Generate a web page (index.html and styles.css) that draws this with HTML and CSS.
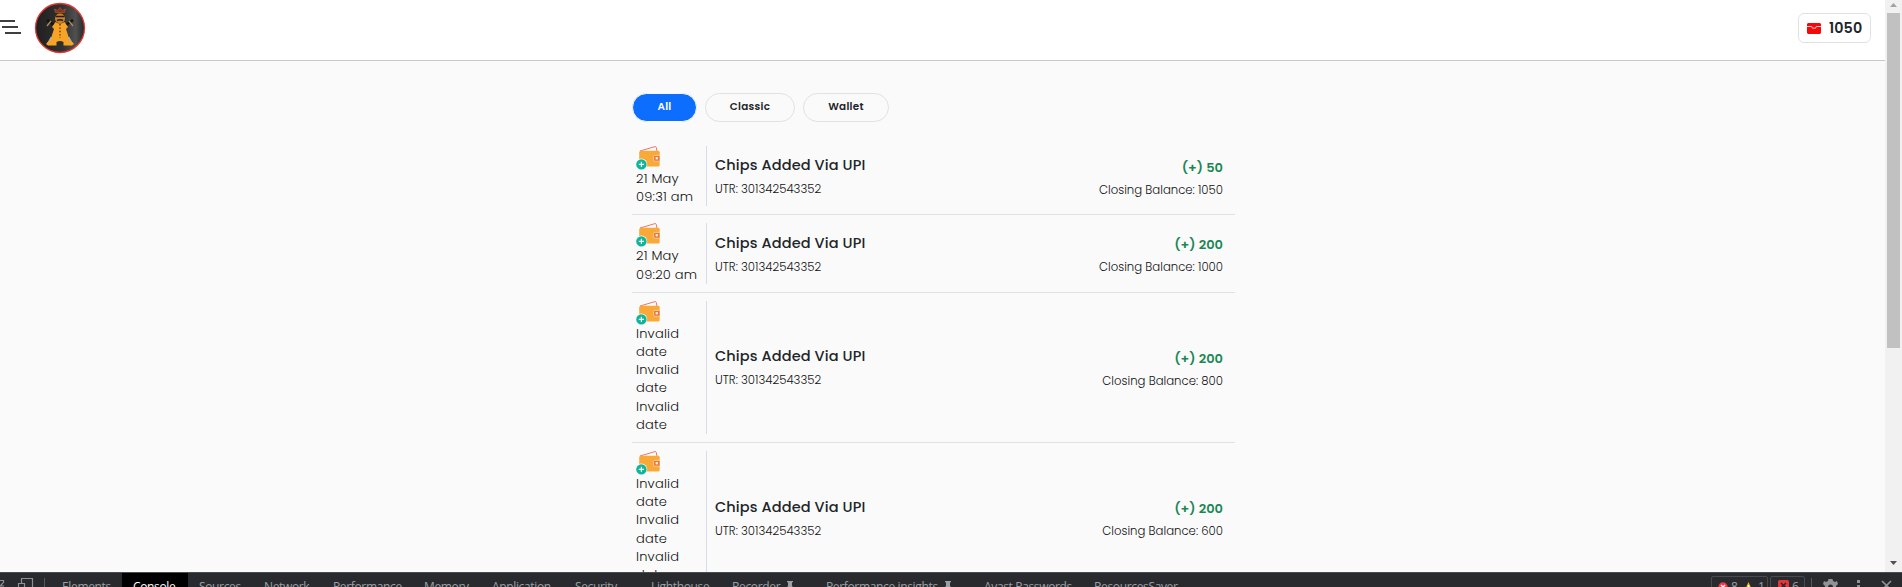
FILE: index.html
```html
<!DOCTYPE html>
<html lang="en">
<head>
<meta charset="utf-8">
<title>Transaction History</title>
<link rel="stylesheet" href="styles.css">
</head>
<body>
<svg width="0" height="0" class="defs">
  <symbol id="wallet" viewBox="0 0 24 24">
    <path d="M4 5L19 .6Q20 .4 20.3 1.5L21 5.5" fill="none" stroke="#ee7468" stroke-width="1"/>
    <path d="M3.2 6.5Q3.2 4.7 5 4.7H22.2Q23.7 4.7 23.7 6.2V18.9Q23.7 20.4 22.2 20.4H5Q3.2 20.4 3.2 18.5Z" fill="#f9a938"/>
    <path d="M24 9.4H18.8Q17.6 9.4 17.6 10.6V14Q17.6 15.2 18.8 15.2H24Z" fill="#e9743c" stroke="#fbd9a5" stroke-width=".8"/>
    <rect x="19.6" y="11.1" width="2.3" height="2.3" fill="#fff0df"/>
    <circle cx="5.4" cy="18.4" r="5.8" fill="#fafafa"/>
    <circle cx="5.4" cy="18.4" r="5.2" fill="#0db59a"/>
    <path d="M5.4 15.8V21M2.8 18.4H8" stroke="#fff" stroke-width="1.2"/>
  </symbol>
  <symbol id="pin" viewBox="0 0 8 11">
    <path d="M1 0H7V1.3H6V5L7.5 6.5V7.5H.5V6.5L2 5V1.3H1ZM3.5 7.5H4.5V11H3.5Z" fill="#9aa0a6"/>
  </symbol>
</svg>
<div class="viewport">
  <div class="page">
    <header class="header">
      <svg class="menu" width="24" height="18" viewBox="0 0 24 18"><path d="M0 3H15M2 9H18M5 15H21" stroke="#000" stroke-width="1.7" fill="none"/></svg>
      <svg class="logo" width="52" height="52" viewBox="0 0 52 52">
        <defs><linearGradient id="lg"><stop offset="0" stop-color="#202020"/><stop offset=".55" stop-color="#303030"/><stop offset=".82" stop-color="#505050"/><stop offset="1" stop-color="#252525"/></linearGradient></defs>
        <circle cx="26" cy="26" r="24.500" fill="url(#lg)" stroke="#df3831" stroke-width="1.300"/>
        <path d="M18 35L14 42M34 35L38 42" stroke="#aeb3bc" stroke-width="2.400"/>
        <path d="M13 18L20 23M39 18L32 23" stroke="#171310" stroke-width="2.600"/>
        <path d="M13 24L17 19M39 24L35 19" stroke="#b08a58" stroke-width="1.300"/>
        <path d="M21.500 20Q26 23 30.500 20L34 25L32 27L34 33L35 38Q39 40 40 42L38 43.500H29.500V40Q26 38 22.500 40V43.500H14L12 42Q13 40 17 38L18 33L20 27L18 25Z" fill="#f7a326"/>
        <circle cx="26" cy="16.500" r="5" fill="#c98321"/>
        <path d="M21.500 14.500H30.500M23 18.500Q26 17 29 18.500" stroke="#291b13" stroke-width="1.400" fill="none"/>
        <path d="M21.500 10.500L20.500 7L23.500 8.500L26 5.500L28.500 8.500L31.500 7L30.500 10.500Z" fill="#8d2d20" stroke="#a5532a" stroke-width=".8"/>
        <path d="M26 22V36" stroke="#5b3410" stroke-width="1.400" stroke-dasharray="1.400 2"/>
      </svg>
      <div class="balance">
        <svg width="14" height="11" viewBox="0 0 14 11"><path d="M1 0H13L14 1V10L13 11H1L0 10V1Z" fill="#f60808"/><path d="M0 3.500H4.800L5.400 5.200H8.600L9.200 3.500H14" fill="none" stroke="#ffc1c1" stroke-width="1"/></svg>
        <span>1050</span>
      </div>
    </header>
    <main class="content">
      <nav class="filters">
        <a class="pill active">All</a><a class="pill classic">Classic</a><a class="pill wallet">Wallet</a>
      </nav>
      <section class="row">
        <div class="when"><svg class="icon"><use href="#wallet"/></svg><div>21 May</div><div>09:31 am</div></div>
        <div class="what"><h2>Chips Added Via UPI</h2><p>UTR: 301342543352</p></div>
        <div class="sum"><b>(+) 50</b><p>Closing Balance: 1050</p></div>
      </section>
      <section class="row">
        <div class="when"><svg class="icon"><use href="#wallet"/></svg><div>21 May</div><div>09:20 am</div></div>
        <div class="what"><h2>Chips Added Via UPI</h2><p>UTR: 301342543352</p></div>
        <div class="sum"><b>(+) 200</b><p>Closing Balance: 1000</p></div>
      </section>
      <section class="row">
        <div class="when"><svg class="icon"><use href="#wallet"/></svg><div>Invalid<br>date</div><div>Invalid<br>date</div><div>Invalid<br>date</div></div>
        <div class="what"><h2>Chips Added Via UPI</h2><p>UTR: 301342543352</p></div>
        <div class="sum"><b>(+) 200</b><p>Closing Balance: 800</p></div>
      </section>
      <section class="row">
        <div class="when"><svg class="icon"><use href="#wallet"/></svg><div>Invalid<br>date</div><div>Invalid<br>date</div><div>Invalid<br>date</div></div>
        <div class="what"><h2>Chips Added Via UPI</h2><p>UTR: 301342543352</p></div>
        <div class="sum"><b>(+) 200</b><p>Closing Balance: 600</p></div>
      </section>
    </main>
  </div>
  <div class="scrollbar">
    <svg width="7" height="4" viewBox="0 0 7 4"><path d="M0 4L3.500 0L7 4Z" fill="#a3a3a3"/></svg>
    <div class="thumb"></div>
    <svg width="7" height="4" viewBox="0 0 7 4"><path d="M0 0L3.500 4L7 0Z" fill="#505050"/></svg>
  </div>
</div>
<footer class="devtools">
  <svg class="tools" width="52" height="14" viewBox="0 0 52 14"><path d="M0 7.500H3.500V10M4 13H0M0 13L3 10M21.500 10V5.500H32.500V14M18.500 14V10.500H24.500V14" fill="none" stroke="#8b9096" stroke-width="1.200"/><path d="M44.500 5V14" stroke="#55585c"/></svg>
  <div class="tabs">
    <span class="tab t-elements">Elements</span><span class="tab selected">Console</span><span class="tab t-sources">Sources</span><span class="tab t-network">Network</span><span class="tab t-performance">Performance</span><span class="tab t-memory">Memory</span><span class="tab t-application">Application</span><span class="tab t-security">Security</span><span class="tab t-lighthouse">Lighthouse</span><span class="tab t-recorder">Recorder<svg class="pin"><use href="#pin"/></svg></span><span class="tab t-insights">Performance insights<svg class="pin"><use href="#pin"/></svg></span><span class="tab t-avast">Avast Passwords</span><span class="tab">ResourcesSaver</span>
  </div>
  <div class="status">
    <span class="count errors"><svg width="10" height="10" viewBox="0 0 10 10"><circle cx="5" cy="5" r="4.700" fill="#ed3b43"/><path d="M3 3L7 7M7 3L3 7" stroke="#fff" stroke-width="1.300"/></svg>8<svg class="warn" width="9" height="10" viewBox="0 0 9 10"><path d="M4.500 0L9 10H0Z" fill="#f3b90b"/><path d="M4.500 3V7" stroke="#fff" stroke-width="1.400"/></svg>1</span>
    <span class="count issues"><svg width="11" height="11" viewBox="0 0 11 11"><rect width="11" height="11" rx="1.500" fill="#e5343b"/><path d="M3 3L8 8M8 3L3 8" stroke="#24262a" stroke-width="1.500"/></svg>6</span>
    <svg class="controls" width="91" height="14" viewBox="0 0 91 14"><path d="M.5 5V14" stroke="#55585c"/><g fill="#909396"><path d="M17.500 6H21.500L22 8L24 9L26 8L27 11L25 13V14H14V13L12 11L13 8L15 9L17 8Z"/><rect x="46" y="7" width="3" height="3"/><rect x="46" y="12" width="3" height="3"/></g><circle cx="19.500" cy="14" r="2.500" fill="#292a2d"/><path d="M71 8L80 17M80 8L71 17" stroke="#909396" stroke-width="1.700"/></svg>
  </div>
</footer>
</body>
</html>
```
FILE: styles.css
```css
* { box-sizing: border-box; }
body {
  margin: 0;
  height: 587px;
  overflow: hidden;
  display: flex;
  flex-direction: column;
  background: #fafafa;
  color: #212529;
  font-family: Poppins, Inter, sans-serif;
}
.defs { position: absolute; }
.viewport { height: 572px; flex: none; display: flex; }
.page { flex: 1; overflow: hidden; }
svg { display: block; flex: none; }

.header {
  height: 61px;
  background: #fff;
  border-bottom: 1px solid #c8c8c8;
  display: flex;
  align-items: flex-start;
}
.menu { margin-top: 18px; }
.logo { margin: 2px 0 0 9.5px; }
.balance {
  margin: 13px 14px 0 auto;
  width: 73px;
  height: 30px;
  border: 1px solid #dee2e6;
  border-radius: 6px;
  display: flex;
  align-items: center;
  gap: 8px;
  padding-left: 8px;
  font-size: 14.3px;
  font-weight: 600;
  letter-spacing: .1px;
}

.content { width: 603px; margin-left: 632px; padding-top: 32px; }
.filters { display: flex; gap: 8px; height: 45px; }
.pill {
  height: 29px;
  border: 1px solid #dee2e6;
  border-radius: 15px;
  display: flex;
  justify-content: center;
  font-size: 10.4px;
  line-height: 26px;
  font-weight: 600;
  letter-spacing: .3px;
}
.active { width: 65px; background: #0d6efd; color: #fff; border-color: #fafafa; }
.classic { width: 90px; }
.wallet { width: 86px; }

.row {
  display: flex;
  align-items: center;
  padding: 8px 12px 8px 4px;
  border-bottom: 1px solid #dee2e6;
}
.when {
  width: 71px;
  border-right: 1px solid #d9dce4;
  font-size: 13px;
  line-height: 18.2px;
  font-weight: 300;
  letter-spacing: .2px;
  color: #111;
}
.when .icon { width: 24px; height: 24px; }
.what { flex: 1; padding-left: 8px; }
h2 { margin: 2px 0 0; font-size: 14.5px; line-height: 18px; font-weight: 500; letter-spacing: .12px; }
p { margin: 6px 0 0; font-size: 11.7px; line-height: 18px; font-weight: 300; color: #111; }
.sum { text-align: right; }
.sum b { display: block; margin-top: 5px; font-size: 13px; line-height: 18px; color: #198754; font-weight: 600; }
.sum p { margin-top: 4px; }

.scrollbar {
  width: 17px;
  background: #f1f1f1;
  display: flex;
  flex-direction: column;
  align-items: center;
  padding: 3px 0 7px;
}
.thumb { width: 13px; height: 335px; margin: 6px 0 auto; background: #c1c1c1; }

.devtools {
  height: 15px;
  flex: none;
  overflow: hidden;
  background: #292a2d;
  border-top: 1px solid #4a4c50;
  display: flex;
  align-items: flex-start;
  color: #9aa0a6;
  font: 12px/28px "Open Sans", "Noto Sans", sans-serif;
}
.tools { width: 52px; margin-right: 10px; }
.tabs { display: flex; flex: 1; }
.tab { display: flex; white-space: nowrap; letter-spacing: -.35px; flex: none; }
.t-elements { width: 60px; }
.selected { width: 66px; padding-left: 11px; margin-right: 11px; background: #000; color: #fff; }
.t-sources { width: 65px; }
.t-network { width: 69px; }
.t-performance { width: 91px; }
.t-memory { width: 68px; }
.t-application { width: 83px; }
.t-security { width: 76px; }
.t-lighthouse { width: 81px; }
.t-recorder { width: 94px; }
.t-insights { width: 158px; }
.t-avast { width: 110px; }
.pin { width: 8px; height: 11px; margin: 8px 0 0 6px; }
.status { display: flex; align-items: flex-start; }
.count { display: flex; height: 22px; margin-top: 3px; border: 1px solid #484a4e; line-height: 20px; border-radius: 2px; }
.count svg { margin: 5px 3px 0 0; }
.errors { width: 57px; padding-left: 6px; margin-right: 2px; }
.count .warn { margin-left: 6px; margin-right: 5px; }
.issues { width: 35px; padding-left: 7px; margin-right: 6px; }
.issues svg { margin-top: 3px; }
```
